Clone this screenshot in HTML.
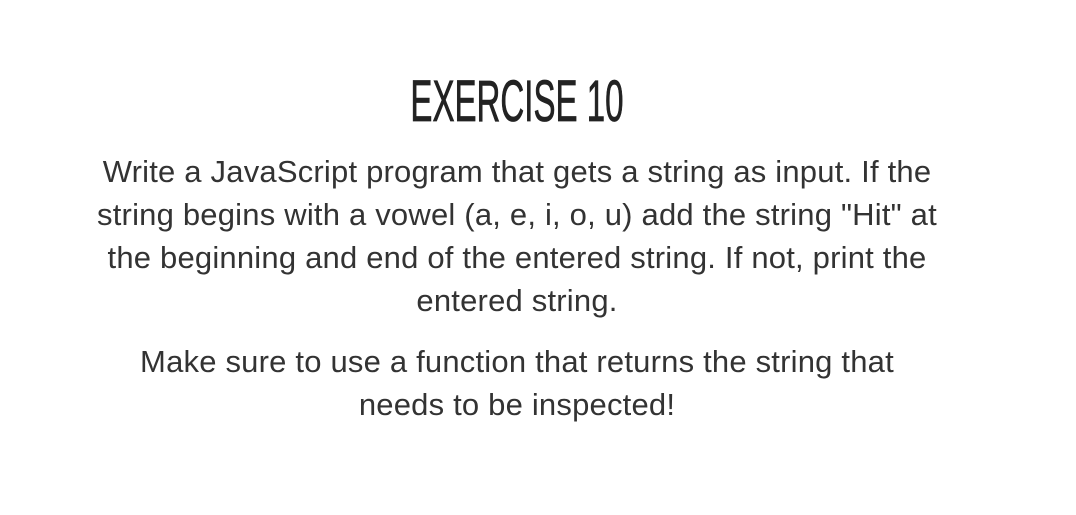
<!DOCTYPE html>
<html><head><meta charset="utf-8"><style>
html,body{margin:0;padding:0;background:#fff;width:1076px;height:515px;overflow:hidden}
body{font-family:"Liberation Sans",sans-serif;color:#2b2b2b}
h1{position:absolute;top:72px;left:0;width:1034px;text-align:center;margin:0;font-weight:normal;font-size:58px;line-height:60px;letter-spacing:0px;color:#222}
h1 span{display:inline-block;transform:scaleX(0.57);transform-origin:center;-webkit-text-stroke:0.8px #222}
p{position:absolute;left:0;width:1034px;text-align:center;margin:0;font-size:31px;line-height:43px;color:#333;letter-spacing:0.2px}
</style></head><body>
<h1><span>EXERCISE 10</span></h1>
<p style="top:150px">Write a JavaScript program that gets a string as input. If the<br>string begins with a vowel (a, e, i, o, u) add the string "Hit" at<br>the beginning and end of the entered string. If not, print the<br>entered string.</p>
<p style="top:340px">Make sure to use a function that returns the string that<br>needs to be inspected!</p>
</body></html>
